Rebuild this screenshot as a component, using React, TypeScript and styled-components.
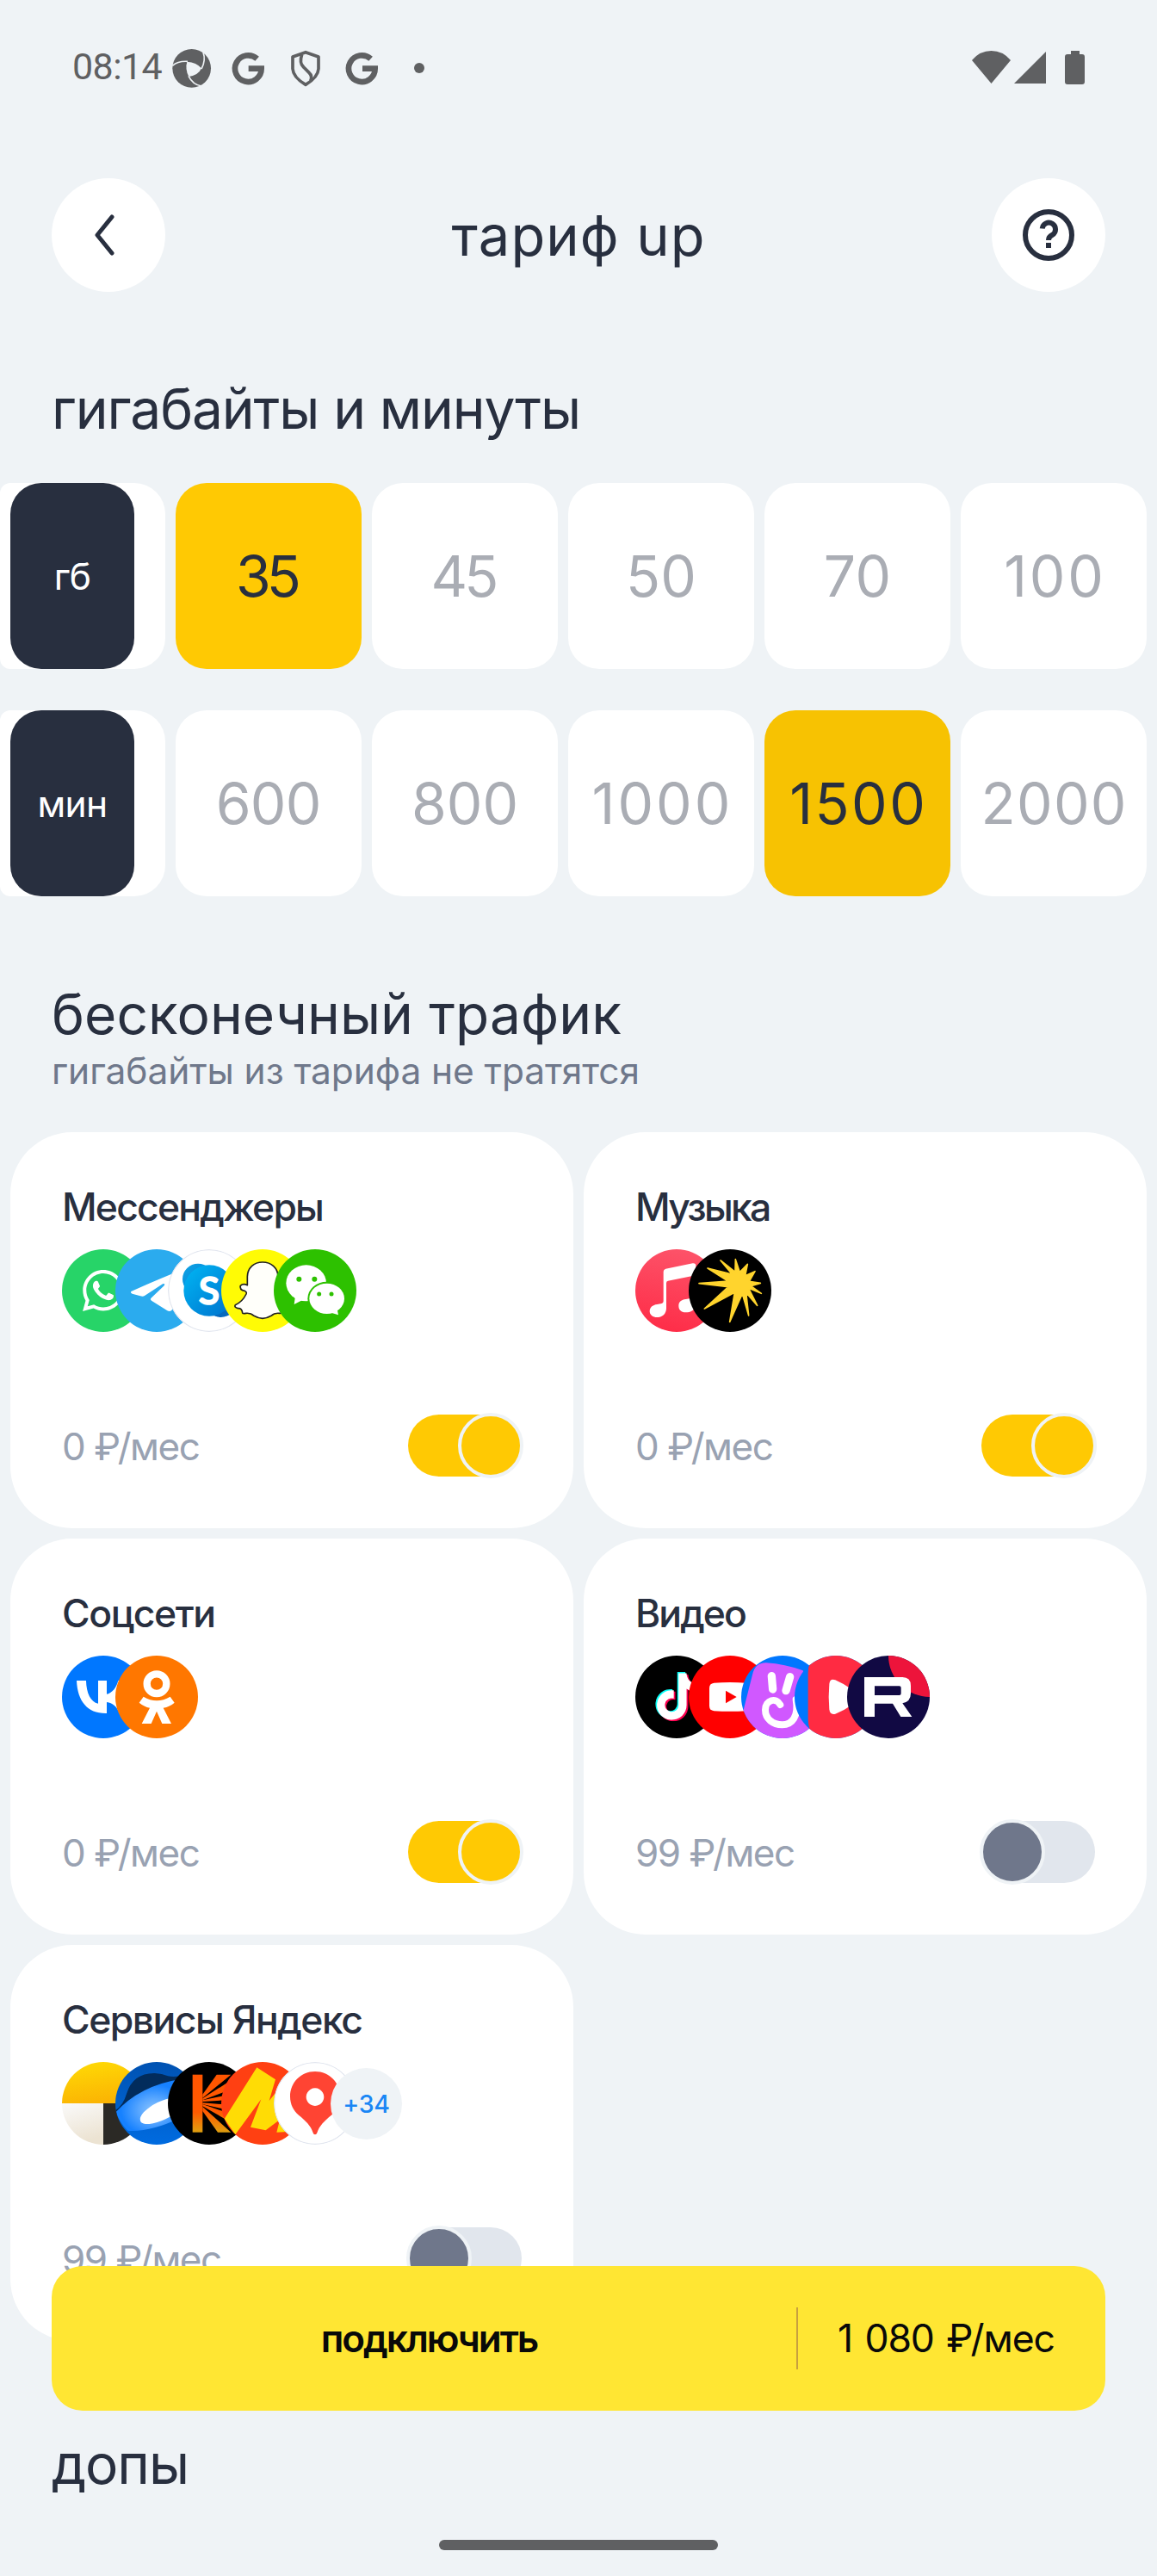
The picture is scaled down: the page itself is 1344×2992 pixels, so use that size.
import React from "react";
import styled, { createGlobalStyle } from "styled-components";
import { FaWhatsapp, FaTiktok } from "react-icons/fa";

const ink = "#282f3f";

const GlobalStyle = createGlobalStyle`
  * { box-sizing: border-box; }
  body { margin: 0; background: #eff3f6; }
  button { border: 0; padding: 0; font: inherit; color: inherit; }
`;

const Screen = styled.main`
  position: relative;
  width: 1344px;
  height: 2992px;
  overflow: hidden;
  background: #eff3f6;
  color: ${ink};
  font-family: Inter, "Liberation Sans", sans-serif;
`;

const StatusBar = styled.div`
  height: 159px;
  padding: 0 83px 0 84px;
  display: flex;
  justify-content: space-between;
  color: #5f6062;
`;

const StatusLeft = styled.div`
  display: flex;
  height: 154px;
  align-items: center;
`;

const Clock = styled.span`
  width: 116px;
  font: 400 43px/50px Roboto, sans-serif;
  letter-spacing: -0.6px;
`;

const Header = styled.header`
  height: 228px;
  padding: 48px 60px 0;
  display: flex;
  justify-content: space-between;
`;

const RoundButton = styled.button`
  width: 132px;
  height: 132px;
  border-radius: 50%;
  background: #fff;
  display: flex;
  align-items: center;
  justify-content: center;
`;

const Title = styled.h1<{ $ls: number }>`
  margin: 0;
  font-size: 64px;
  line-height: 78px;
  font-weight: 400;
  white-space: nowrap;
  letter-spacing: ${(p) => p.$ls}px;
`;

const HeaderTitle = styled(Title)`
  padding-top: 28px;
  font-size: 65px;
`;

const SectionTitle = styled(Title).attrs({ as: "h2" })<{ $top: number }>`
  padding: ${(p) => p.$top}px 60px 0;
`;

const Subtitle = styled.p`
  margin: 1px 0 0;
  padding: 0 60px;
  height: 97px;
  font-size: 42.5px;
  line-height: 52px;
  color: #6f788b;
  white-space: nowrap;
  letter-spacing: -0.1px;
`;

const Sliders = styled.section`
  padding-top: 47px;
  display: flex;
  flex-direction: column;
  gap: 48px;
`;

const SliderRow = styled.div`
  display: flex;
  height: 216px;
  gap: 12px;
`;

const Peek = styled.div`
  width: 192px;
  padding-left: 12px;
  background: #fff;
  border-radius: 12px 36px 36px 12px;
`;

const UnitLabel = styled.div`
  width: 144px;
  height: 216px;
  border-radius: 36px;
  background: ${ink};
  color: #fff;
  display: flex;
  align-items: center;
  justify-content: center;
  font-size: 42.5px;
  letter-spacing: -0.6px;
`;

const Option = styled.button<{ $bg?: string; $ls: number }>`
  width: 216px;
  border-radius: 36px;
  background: ${(p) => p.$bg ?? "#fff"};
  color: ${(p) => (p.$bg ? ink : "#aaadb4")};
  font-size: 66px;
  letter-spacing: ${(p) => p.$ls}px;
  text-indent: ${(p) => p.$ls}px;
  text-align: center;
`;

const CardGrid = styled.section`
  padding: 0 12px;
  display: grid;
  grid-template-columns: 654px 654px;
  grid-auto-rows: 460px;
  gap: 12px;
`;

const Card = styled.article`
  border-radius: 72px;
  background: #fff;
  padding: 61px 58px 0 60px;
`;

const CardTitle = styled.h3<{ $ls: number }>`
  margin: 0;
  height: 75px;
  font-size: 44.5px;
  line-height: 53px;
  font-weight: 500;
  letter-spacing: ${(p) => p.$ls}px;
  white-space: nowrap;
`;

const IconStack = styled.div`
  height: 190px;
  display: flex;
`;

const Badge = styled.span`
  width: 96px;
  height: 96px;
  flex: none;
  border-radius: 50%;
  overflow: hidden;
  & + & {
    margin-left: -34.5px;
  }
  svg {
    display: block;
  }
`;

const MoreBadge = styled.span`
  width: 83px;
  height: 83px;
  margin: 7px 0 0 -30px;
  border-radius: 50%;
  background: #eff3f6;
  color: #1a86f5;
  display: flex;
  align-items: center;
  justify-content: center;
  font-size: 28.5px;
  font-weight: 500;
  letter-spacing: -0.3px;
`;

const CardFooter = styled.div`
  display: flex;
  justify-content: space-between;
  align-items: center;
  height: 76px;
`;

const Price = styled.span`
  padding-top: 2px;
  font-size: 44px;
  color: #99a2b2;
  letter-spacing: -1.5px;
  white-space: nowrap;
`;

const Track = styled.button<{ $on: boolean }>`
  width: 132px;
  height: 72px;
  margin-right: 2px;
  border-radius: 36px;
  background: ${(p) => (p.$on ? "#ffc903" : "#e1e6ed")};
  display: flex;
  align-items: center;
  justify-content: ${(p) => (p.$on ? "flex-end" : "flex-start")};
`;

const Thumb = styled.span<{ $on: boolean }>`
  width: 76px;
  height: 76px;
  margin: 0 -2px;
  flex: none;
  border-radius: 50%;
  border: 4px solid #eff3f6;
  background: ${(p) => (p.$on ? "#ffc903" : "#6f778b")};
`;

const BuyBar = styled.button`
  position: absolute;
  left: 60px;
  top: 2632px;
  width: 1224px;
  height: 168px;
  border-radius: 36px;
  background: #ffe633;
  color: #090909;
  display: flex;
  align-items: center;
  font-size: 44.5px;
`;

const BuyLabel = styled.span`
  width: 865px;
  text-align: center;
  padding-left: 12px;
  font-weight: 600;
  font-size: 44px;
  letter-spacing: -2.1px;
`;

const BuyPrice = styled.span`
  flex: 1;
  height: 72px;
  line-height: 73px;
  padding-left: 46px;
  border-left: 2px solid #c8a03e;
  text-align: left;
  white-space: nowrap;
  letter-spacing: -1.1px;
  word-spacing: 3px;
`;

const HomeBar = styled.div`
  position: absolute;
  left: 510px;
  top: 2950px;
  width: 324px;
  height: 12px;
  border-radius: 6px;
  background: #5f6062;
`;

const WhatsApp = () => (
  <svg width="96" height="96" viewBox="36 63 288 288">
    <rect x="36" y="63" width="288" height="288" fill="#27d468" />
    <FaWhatsapp x={98} y={125} size={164} color="#fff" />
  </svg>
);

const Telegram = () => (
  <svg width="96" height="96" viewBox="219 63 288 288">
    <rect x="219" y="63" width="288" height="288" fill="#2babee" />
    <path
      fill="#fff"
      d="M274 210Q330 184 415 149L450 138L418 272Q412 282 400 277L345 242Q338 238 345 232L389 190Q394 181 384 184L322 224Q316 229 306 226L278 218Q270 214 274 210Z"
    />
  </svg>
);

const Skype = () => (
  <svg width="96" height="96" viewBox="405 63 288 288">
    <defs>
      <linearGradient id="sky" x1="0" y1="0" x2="1" y2="1">
        <stop offset="0" stopColor="#00b7f4" />
        <stop offset="1" stopColor="#0070cc" />
      </linearGradient>
      <linearGradient id="skyTop" x1="0" y1="0" x2="1" y2="1">
        <stop offset="0" stopColor="#0fa5e5" />
        <stop offset="1" stopColor="#0078d4" />
      </linearGradient>
    </defs>
    <circle cx="549" cy="207" r="142" fill="#fff" stroke="#e2e6ef" strokeWidth="4" />
    <circle cx="510" cy="167" r="54" fill="url(#skyTop)" />
    <circle cx="590" cy="245" r="55" fill="#0769bd" />
    <circle cx="549" cy="207" r="89" fill="url(#sky)" />
    <text x="549" y="256" fill="#fff" fontSize="134" fontWeight="600" textAnchor="middle" fontFamily="Lato, sans-serif" stroke="#fff" strokeWidth="5" strokeLinejoin="round">
      S
    </text>
  </svg>
);

const Snapchat = () => (
  <svg width="96" height="96" viewBox="588 63 288 288">
    <rect x="588" y="63" width="288" height="288" fill="#fffb05" />
    <path
      fill="#fffffa"
      stroke="#222"
      strokeWidth="5"
      strokeLinejoin="round"
      d="M732 108C701 108 680 129 679 158L679 188Q664 181 655 190Q652 201 662 206Q679 209 675 219Q662 246 637 257Q632 265 646 269Q661 268 662 285Q664 288 674 286Q690 284 702 295Q732 313 762 295Q774 284 790 286Q800 288 802 280V268L832 258Q800 240 789 219L786 158C785 129 763 108 732 108Z"
    />
  </svg>
);

const WeChat = () => (
  <svg width="96" height="96" viewBox="774 63 288 288">
    <rect x="774" y="63" width="288" height="288" fill="#2dc100" />
    <path fill="#fff" d="M849 226L845 255L874 240L905 241V226Z" />
    <ellipse cx="887" cy="181" rx="70" ry="63" fill="#fff" />
    <ellipse cx="959" cy="235" rx="67" ry="59" fill="#2dc100" />
    <ellipse cx="959" cy="235" rx="61" ry="53" fill="#fff" />
    <path fill="#fff" d="M974 284L999 292L995 270Z" />
    <g fill="#2dc100">
      <circle cx="862" cy="167" r="9" />
      <circle cx="916" cy="167" r="9" />
      <circle cx="932" cy="219" r="7.5" />
      <circle cx="975" cy="219" r="7.5" />
    </g>
  </svg>
);

const AppleMusic = () => (
  <svg width="96" height="96" viewBox="54 63 288 288">
    <defs>
      <linearGradient id="apple" x1="0.6" y1="0" x2="0.4" y2="1">
        <stop offset="0" stopColor="#fd5369" />
        <stop offset="1" stopColor="#fe2d48" />
      </linearGradient>
    </defs>
    <rect x="54" y="63" width="288" height="288" fill="url(#apple)" />
    <path
      fill="#fff"
      d="M152 141Q152 133 160 131L254 112Q265 111 265 121V254C265 276 245 283 230 283C212 283 205 272 205 260C205 246 215 239 230 237L247 234Q253 232 253 226V156L168 173Q162 174 162 181V268C162 290 146 300 130 300C113 300 104 290 104 279C104 266 114 257 130 255L146 252Q152 250 152 244Z"
    />
  </svg>
);

const YandexMusic = () => (
  <svg width="96" height="96" viewBox="237 63 288 288">
    <rect x="237" y="63" width="288" height="288" fill="#000" />
    <path
      fill="#ffd42d"
      stroke="#ffd42d"
      strokeWidth="5"
      strokeLinejoin="round"
      d="M273 182L374 174L303 129L388 150L348 102L399 142L400 98L415 143L442 115L434 155L468 140L448 175L487 181L454 191L490 217L446 199L476 259L437 214L446 294L424 218L380 316L397 214L292 270L375 194Z"
    />
  </svg>
);

const Vk = () => (
  <svg width="96" height="96" viewBox="36 69 288 288">
    <rect x="36" y="69" width="288" height="288" fill="#0077ff" />
    <path
      fill="#fff"
      d="M87 156H120C121 200 136 231 162 236V156H192V203C209 201 226 181 232 156H262C257 184 236 207 221 216C236 223 260 242 269 270H236C229 248 212 233 192 231V270H188C124 270 90 227 87 156Z"
    />
  </svg>
);

const Ok = () => (
  <svg width="96" height="96" viewBox="219 69 288 288">
    <rect x="219" y="69" width="288" height="288" fill="#ff7700" />
    <circle cx="363" cy="167" r="34" fill="none" stroke="#fff" strokeWidth="25" />
    <path
      fill="#fff"
      d="M317 212Q363 239 410 212L425 233Q409 247 386 251L414 306H382L363 263L344 306H311L339 251Q319 247 302 233Z"
    />
  </svg>
);

const TikTok = () => (
  <svg width="96" height="96" viewBox="54 69 288 288">
    <rect x="54" y="69" width="288" height="288" fill="#000" />
    <FaTiktok x={114} y={126} size={164} color="#08fff9" />
    <FaTiktok x={124} y={134} size={164} color="#fe0050" />
    <FaTiktok x={119} y={130} size={163} color="#fff" />
  </svg>
);

const YouTube = () => (
  <svg width="96" height="96" viewBox="237 69 288 288">
    <rect x="237" y="69" width="288" height="288" fill="#ff0000" />
    <path fill="#fff" d="M325 164Q381 160 437 164Q453 166 453 182V244Q453 260 437 262Q381 265 325 262Q309 260 309 244V182Q309 166 325 164Z" />
    <path fill="#ff0000" d="M366 191L404 213L366 235Z" />
  </svg>
);

const VkClips = () => (
  <svg width="96" height="96" viewBox="423 69 288 288">
    <rect x="423" y="69" width="288" height="288" fill="#0077ff" />
    <path fill="#d058ff" d="M428 270L462 136Q471 93 510 94Q575 98 638 121L680 250V370H430Z" />
    <g fill="none" stroke="#fff" strokeLinecap="round">
      <path strokeWidth="28" d="M529 140L533 186" />
      <path strokeWidth="28" d="M593 143L579 191" />
      <path strokeWidth="24" d="M559 240C546 214 507 222 507 258C507 290 534 310 566 310C600 310 624 282 614 222" />
    </g>
  </svg>
);

const VkVideo = () => (
  <svg width="96" height="96" viewBox="606 69 288 288">
    <rect x="606" y="69" width="288" height="288" fill="#0077ff" />
    <path fill="#ff2b42" d="M690 60Q653 80 653 130V290Q653 330 680 360H900V60Z" />
    <path fill="#fff" d="M725 213L727 168Q729 147 748 154Q780 168 808 188Q835 213 808 239Q780 259 748 272Q729 277 727 256Z" />
  </svg>
);

const Rutube = () => (
  <svg width="96" height="96" viewBox="792 69 288 288">
    <rect x="792" y="69" width="288" height="288" fill="#110943" />
    <circle cx="1080" cy="69" r="144" fill="#ed143b" />
    <path
      fill="#fff"
      fillRule="evenodd"
      d="M852 144H985Q1014 144 1014 174V200Q1014 229 985 235L1018 282H979L951 236H888V282H852ZM888 175V207H974Q980 207 980 201V181Q980 175 974 175Z"
    />
  </svg>
);

const Yandex = () => (
  <svg width="96" height="96" viewBox="36 75 288 288">
    <defs>
      <linearGradient id="yaTop" x1="0" y1="0" x2="0.3" y2="1">
        <stop offset="0" stopColor="#ffdc05" />
        <stop offset="1" stopColor="#fbb503" />
      </linearGradient>
      <linearGradient id="yaLeft" x1="0" y1="0" x2="0.3" y2="1">
        <stop offset="0" stopColor="#fafafa" />
        <stop offset="1" stopColor="#ece3d2" />
      </linearGradient>
    </defs>
    <rect x="36" y="75" width="288" height="144" fill="url(#yaTop)" />
    <rect x="36" y="219" width="144" height="144" fill="url(#yaLeft)" />
    <rect x="180" y="219" width="144" height="144" fill="#2b2925" />
  </svg>
);

const Disk = () => (
  <svg width="96" height="96" viewBox="219 75 288 288">
    <defs>
      <linearGradient id="diskBg" x1="0" y1="0" x2="0" y2="1">
        <stop offset="0" stopColor="#0052b2" />
        <stop offset="1" stopColor="#006be0" />
      </linearGradient>
      <radialGradient id="diskGlow" cx="0.6" cy="0.6" r="0.5">
        <stop offset="0" stopColor="#8cc5ff" />
        <stop offset="0.45" stopColor="#59a7ff" />
        <stop offset="1" stopColor="#1681ff" />
      </radialGradient>
    </defs>
    <rect x="219" y="75" width="288" height="288" fill="url(#diskBg)" />
    <path fill="#022c5c" d="M215 246Q246 228 258 186Q280 113 356 114Q382 115 402 124Q420 128 445 124V150L215 260Z" />
    <path fill="url(#diskGlow)" d="M215 256Q300 158 445 135V270Q340 320 262 314Q232 285 222 250Z" />
    <ellipse cx="380" cy="245" rx="82" ry="32" transform="rotate(-26 380 245)" fill="#fff" />
  </svg>
);

const Kinopoisk = () => (
  <svg width="96" height="96" viewBox="405 75 288 288">
    <defs>
      <linearGradient id="kino" gradientUnits="userSpaceOnUse" x1="0" y1="119" x2="0" y2="320">
        <stop offset="0" stopColor="#ff5500" />
        <stop offset="0.65" stopColor="#ff5a00" />
        <stop offset="1" stopColor="#dfa010" />
      </linearGradient>
    </defs>
    <rect x="405" y="75" width="288" height="288" fill="#000" />
    <g fill="url(#kino)">
      <rect x="491" y="119" width="35" height="201" />
      <path d="M526 188L575 119H625L526 200Z" />
      <path d="M526 202L640 129V165L526 208Z" />
      <path d="M526 208L640 184V206L526 213Z" />
      <path d="M526 217L640 226V248L526 222Z" />
      <path d="M526 222L640 262V294L526 229Z" />
      <path d="M526 231L625 320H579L526 246Z" />
    </g>
  </svg>
);

const Market = () => (
  <svg width="96" height="96" viewBox="588 75 288 288">
    <rect x="588" y="75" width="288" height="288" fill="#ff4012" />
    <path fill="#ffdc05" d="M712 94L777 136L755 210L820 130V318L781 320L792 276L743 313L690 302L727 205L637 328L599 273Z" />
  </svg>
);

const Maps = () => (
  <svg width="96" height="96" viewBox="774 75 288 288">
    <circle cx="918" cy="219" r="142" fill="#fff" stroke="#e2e6ef" strokeWidth="4" />
    <path
      fill="#ff4433"
      fillRule="evenodd"
      d="M918 108C868 108 831 147 831 195C831 223 843 245 861 260C884 279 904 297 911 322Q912 328 918 328Q923 328 925 322C932 297 952 279 975 260C993 245 1005 223 1005 195C1005 147 968 108 918 108ZM918 166A31 31 0 1 1 917.9 166Z"
    />
  </svg>
);

const StatusGlyphs = () => (
  <svg width="300" height="54" viewBox="600 30 900 162" fill="#5f6062">
    <g transform="translate(180 -30)">
      <circle cx="488" cy="148" r="67" />
      <path fill="#eff3f6" d="M472 125Q505 127 522 148Q512 172 478 177Q464 150 472 125Z" />
      <g fill="none" stroke="#eff3f6" strokeWidth="5">
        <path d="M421 139Q440 122 474 124" />
        <path d="M522 150Q538 120 528 92" />
        <path d="M477 175Q492 205 522 210" />
      </g>
      <g fill="none" stroke="#5f6062" strokeWidth="20">
        <path d="M716 115A46 46 0 1 0 731 149H686" />
        <path d="M1112 115A46 46 0 1 0 1127 149H1083" />
      </g>
      <g fill="none" stroke="#5f6062" strokeWidth="11" strokeLinejoin="round">
        <path d="M885 92L930 108V150Q928 180 885 205Q842 180 840 150V108Z" />
        <path d="M872 100Q862 130 878 144L897 163Q910 175 902 192" />
      </g>
      <circle cx="1281" cy="147" r="18" />
    </g>
  </svg>
);

const SystemGlyphs = () => (
  <svg width="132" height="159" viewBox="1129 0 132 159" fill="#5f6062">
    <path d="M1151.500 97L1129 70Q1138 59 1151.500 59Q1165 59 1174 70Z" />
    <path d="M1178 97L1215 60V97Z" />
    <path d="M1244 59h10v4h3q3 0 3 3v29q0 3-3 3h-17q-3 0-3-3v-29q0-3 3-3h4z" />
  </svg>
);

const gigabytes = [
  { value: "35", ls: -5 },
  { value: "45", ls: -4 },
  { value: "50", ls: 0 },
  { value: "70", ls: 0.5 },
  { value: "100", ls: 2.8 },
];

const minutes = [
  { value: "600", ls: -0.8 },
  { value: "800", ls: 0 },
  { value: "1000", ls: 3 },
  { value: "1500", ls: 2.5 },
  { value: "2000", ls: 1.2 },
];

const cards = [
  { title: "Мессенджеры", ls: -1.8, price: "0 ₽/мес", on: true, icons: [WhatsApp, Telegram, Skype, Snapchat, WeChat] },
  { title: "Музыка", ls: -2.7, price: "0 ₽/мес", on: true, icons: [AppleMusic, YandexMusic] },
  { title: "Соцсети", ls: -1.4, price: "0 ₽/мес", on: true, icons: [Vk, Ok] },
  { title: "Видео", ls: -1.9, price: "99 ₽/мес", on: false, icons: [TikTok, YouTube, VkClips, VkVideo, Rutube] },
  { title: "Сервисы Яндекс", ls: -1.5, price: "99 ₽/мес", on: false, icons: [Yandex, Disk, Kinopoisk, Market, Maps], more: "+34" },
];

export default function App() {
  return (
    <Screen>
      <GlobalStyle />
      <StatusBar>
        <StatusLeft>
          <Clock>08:14</Clock>
          <StatusGlyphs />
        </StatusLeft>
        <SystemGlyphs />
      </StatusBar>
      <Header>
        <RoundButton aria-label="Назад">
          <svg width="60" height="60" viewBox="0 0 60 60" fill="none" stroke={ink} strokeWidth="5" strokeLinecap="round" strokeLinejoin="round">
            <path d="M34 9L17 30L34 51" />
          </svg>
        </RoundButton>
        <HeaderTitle $ls={1.1}>тариф up</HeaderTitle>
        <RoundButton aria-label="Помощь">
          <svg width="62" height="62" viewBox="0 0 62 62" fill="none" stroke={ink} strokeWidth="6">
            <circle cx="31" cy="31" r="27" />
            <path d="M23.700 23.500A7.700 7.700 0 1 1 35.500 30.800Q31 33 31 37" />
            <path d="M31 40V46" />
          </svg>
        </RoundButton>
      </Header>
      <SectionTitle $ls={-1.1} $top={49}>гигабайты и минуты</SectionTitle>
      <Sliders>
        <SliderRow>
          <Peek><UnitLabel>гб</UnitLabel></Peek>
          {gigabytes.map(({ value, ls }) => (
            <Option key={value} $ls={ls} $bg={value === "35" ? "#ffc903" : undefined}>{value}</Option>
          ))}
        </SliderRow>
        <SliderRow>
          <Peek><UnitLabel>мин</UnitLabel></Peek>
          {minutes.map(({ value, ls }) => (
            <Option key={value} $ls={ls} $bg={value === "1500" ? "#f7c202" : undefined}>{value}</Option>
          ))}
        </SliderRow>
      </Sliders>
      <SectionTitle $ls={0.1} $top={98}>бесконечный трафик</SectionTitle>
      <Subtitle>гигабайты из тарифа не тратятся</Subtitle>
      <CardGrid>
        {cards.map((c) => (
          <Card key={c.title}>
            <CardTitle $ls={c.ls}>{c.title}</CardTitle>
            <IconStack>
              {c.icons.map((Icon, i) => (
                <Badge key={i}><Icon /></Badge>
              ))}
              {c.more && <MoreBadge>{c.more}</MoreBadge>}
            </IconStack>
            <CardFooter>
              <Price>{c.price}</Price>
              <Track $on={c.on}><Thumb $on={c.on} /></Track>
            </CardFooter>
          </Card>
        ))}
      </CardGrid>
      <SectionTitle $ls={-1.1} $top={104}>допы</SectionTitle>
      <BuyBar>
        <BuyLabel>подключить</BuyLabel>
        <BuyPrice>1 080 ₽/мес</BuyPrice>
      </BuyBar>
      <HomeBar />
    </Screen>
  );
}
